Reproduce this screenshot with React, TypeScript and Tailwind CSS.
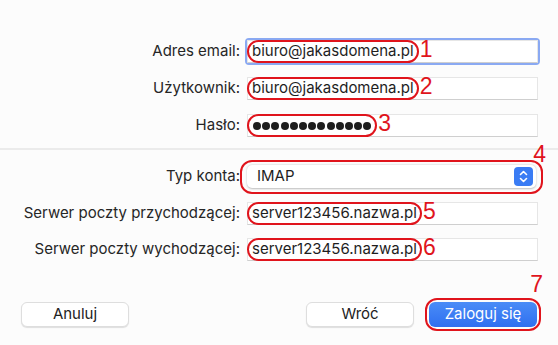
import React from 'react';

const RED = 'border-[#e0141c]';

function Mark({ n, className = '' }: { n: string; className?: string }) {
    return (
        <span
            className={`text-[#e0141c] text-[23px] leading-none font-light ${className}`}
            style={{ fontFamily: '"Liberation Sans", Arial, sans-serif' }}
        >
            {n}
        </span>
    );
}

function Dots({ count }: { count: number }) {
    return (
        <span className="flex gap-[1.2px] px-[1px]">
            {Array.from({ length: count }).map((_, i) => (
                <span key={i} className="w-[8px] h-[8px] rounded-full bg-[#1e1e1e]" />
            ))}
        </span>
    );
}

function Field({ label, value, n, focus = false, dots = false }: { label: string; value: string; n: string; focus?: boolean; dots?: boolean }) {
    return (
        <div className="flex items-center h-[23px]">
            <div className="w-[241px] text-right pr-[1px] text-[#262626]">{label}</div>
            <div className="ml-[6px] relative w-[291px] h-[23px]">
                {focus && <div className="absolute -inset-[2px] rounded-[4px] border-[3px] border-[#8aa9f2]" />}
                <div className="absolute inset-0 bg-white border border-[#e6e6e6] border-b-[#cfcfcf]" />
                <div className="relative flex items-center h-full">
                    <span className={`h-[23px] flex items-center border-2 ${RED} rounded-full pl-[3px] pr-[3px] text-[#1e1e1e]`}>
                        {dots ? <Dots count={value.length} /> : value}
                    </span>
                    <Mark n={n} className="-mt-[4px] ml-[1px]" />
                </div>
            </div>
        </div>
    );
}

function Btn({ children, primary = false }: { children: React.ReactNode; primary?: boolean }) {
    return (
        <div
            className={`w-[108px] h-[25px] rounded-[6px] flex items-center justify-center ${primary
                ? 'bg-gradient-to-b from-[#4a8cf7] to-[#2f6ff0] text-white'
                : 'bg-white text-[#222] border border-[#dedede] shadow-[0_1px_1px_rgba(0,0,0,0.12)]'}`}
        >
            {children}
        </div>
    );
}

export default function App() {
    return (
        <div
            className="w-[558px] h-[345px] bg-[#fcfcfc] text-[15px] overflow-hidden"
            style={{ fontFamily: 'Inter, "Liberation Sans", sans-serif' }}
        >
            <div className="pt-[40px] flex flex-col gap-[14px]">
                <Field label="Adres email:" value="biuro@jakasdomena.pl" n="1" focus />
                <Field label="Użytkownik:" value="biuro@jakasdomena.pl" n="2" />
                <Field label="Hasło:" value="*************" n="3" dots />
            </div>

            <div className="mt-[11px] h-[2px] bg-[#ebebeb]" />

            <div className="pt-[15px] flex flex-col gap-[13px]">
                <div className="flex items-center h-[23px]">
                    <div className="w-[241px] text-right pr-[1px] text-[#262626]">Typ konta:</div>
                    <div className="relative -ml-[1px]">
                        <div className={`w-[303px] h-[34px] border-2 ${RED} rounded-[12px] flex items-center px-[5px]`}>
                            <div className="w-[289px] h-[23px] bg-white rounded-[5px] shadow-[0_0.5px_2px_rgba(0,0,0,0.25)] flex items-center pl-[10px] pr-[3px]">
                                <span className="flex-1 text-[#1e1e1e]">IMAP</span>
                                <div className="w-[19px] h-[19px] rounded-[4px] bg-[#3a7cf4] flex items-center justify-center">
                                    <svg width="9" height="13" viewBox="0 0 9 13" fill="none" stroke="white" strokeWidth="1.6" strokeLinecap="round" strokeLinejoin="round">
                                        <path d="M1.5 4.5 L4.5 1.5 L7.5 4.5" />
                                        <path d="M1.5 8.5 L4.5 11.5 L7.5 8.5" />
                                    </svg>
                                </div>
                            </div>
                        </div>
                        <Mark n="4" className="absolute -right-[3px] -top-[17px]" />
                    </div>
                </div>
                <div className="mt-[1px] flex flex-col gap-[13px]">
                    <Field label="Serwer poczty przychodzącej:" value="server123456.nazwa.pl" n="5" />
                    <Field label="Serwer poczty wychodzącej:" value="server123456.nazwa.pl" n="6" />
                </div>
            </div>

            <div className="mt-[41px] flex items-center pl-[21px] pr-[20px]">
                <Btn>Anuluj</Btn>
                <div className="flex-1" />
                <Btn>Wróć</Btn>
                <div className="ml-[15px] mr-[1px] relative">
                    <div className={`border-2 ${RED} rounded-[12px] p-[2px] -m-[4px]`}>
                        <Btn primary>Zaloguj się</Btn>
                    </div>
                    <Mark n="7" className="absolute -right-[6px] -top-[29px]" />
                </div>
            </div>
        </div>
    );
}
